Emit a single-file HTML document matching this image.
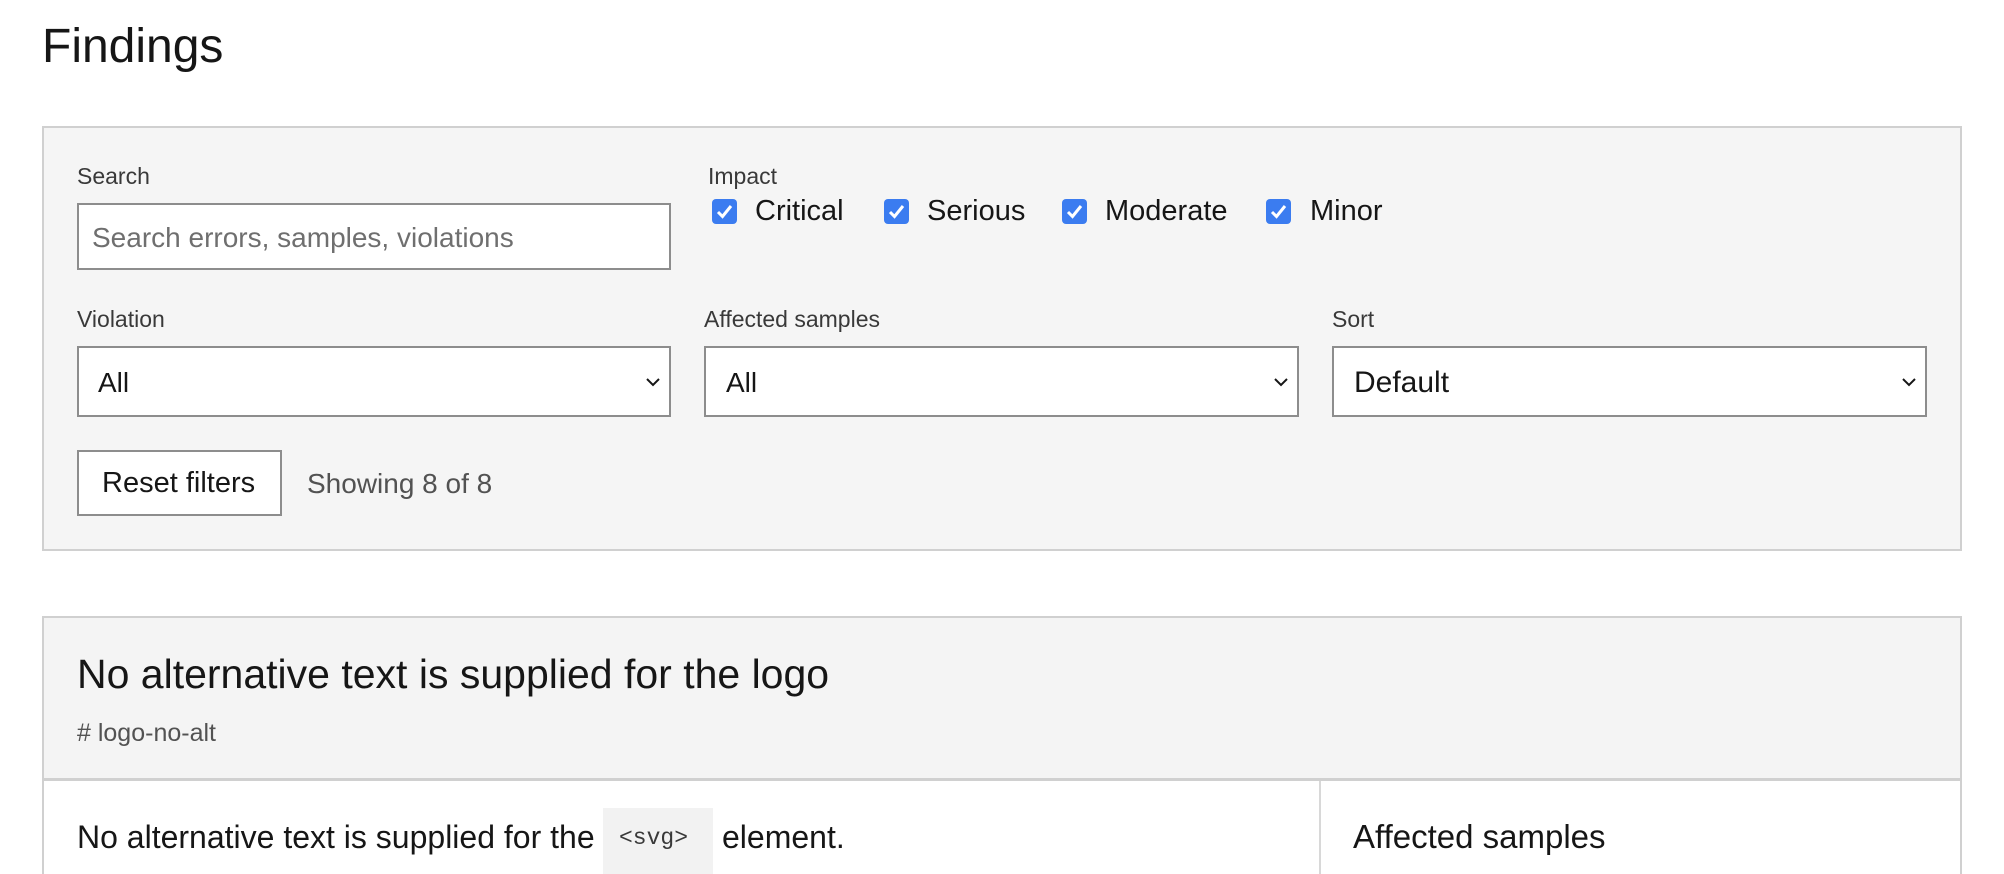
<!DOCTYPE html>
<html style="overflow:hidden"><head><meta charset="utf-8"><style>
*{box-sizing:border-box;margin:0;padding:0}
html,body{width:2004px;height:874px;overflow:hidden}
body{background:#fff;font-family:"Liberation Sans",sans-serif;color:#161616;position:relative}
.a{position:absolute;white-space:nowrap}
.lbl{font-size:23px;color:#393939}
.box{position:absolute;border:2px solid #8d8d8d;background:#fff}
.cb{position:absolute;width:25px;height:25px;background:#3b7cf0;border-radius:4px}
.cb svg{position:absolute;left:3px;top:3px}
.ck{font-size:29px;color:#161616}
.sel{font-size:28px}
</style></head><body>
<div class="a" style="left:42px;top:19px;font-size:48px;font-weight:300">Findings</div>

<div style="position:absolute;left:42px;top:126px;width:1920px;height:425px;background:#f5f5f5;border:2px solid #d0d0d0"></div>

<div class="a lbl" style="left:77px;top:163px">Search</div>
<div class="box" style="left:77px;top:203px;width:594px;height:67px"></div>
<div class="a" style="left:92px;top:222px;font-size:28px;color:#6f6f6f">Search errors, samples, violations</div>

<div class="a lbl" style="left:708px;top:163px">Impact</div>
<div class="cb" style="left:712px;top:199px"><svg width="19" height="19" viewBox="0 0 19 19"><path d="M3 10 L7.5 14.5 L16 4" stroke="#fff" stroke-width="3" fill="none"/></svg></div>
<div class="a ck" style="left:755px;top:195px">Critical</div>
<div class="cb" style="left:884px;top:199px"><svg width="19" height="19" viewBox="0 0 19 19"><path d="M3 10 L7.5 14.5 L16 4" stroke="#fff" stroke-width="3" fill="none"/></svg></div>
<div class="a ck" style="left:927px;top:195px">Serious</div>
<div class="cb" style="left:1062px;top:199px"><svg width="19" height="19" viewBox="0 0 19 19"><path d="M3 10 L7.5 14.5 L16 4" stroke="#fff" stroke-width="3" fill="none"/></svg></div>
<div class="a ck" style="left:1105px;top:195px">Moderate</div>
<div class="cb" style="left:1266px;top:199px"><svg width="19" height="19" viewBox="0 0 19 19"><path d="M3 10 L7.5 14.5 L16 4" stroke="#fff" stroke-width="3" fill="none"/></svg></div>
<div class="a ck" style="left:1310px;top:195px">Minor</div>

<div class="a lbl" style="left:77px;top:306px">Violation</div>
<div class="a lbl" style="left:704px;top:306px">Affected samples</div>
<div class="a lbl" style="left:1332px;top:306px">Sort</div>

<div class="box" style="left:77px;top:346px;width:594px;height:71px"></div>
<div class="a sel" style="left:98px;top:367px">All</div>
<svg class="a" style="left:645px;top:376px" width="16" height="12" viewBox="0 0 16 12"><path d="M2 3 L8 9 L14 3" stroke="#161616" stroke-width="2" fill="none"/></svg>
<div class="box" style="left:704px;top:346px;width:595px;height:71px"></div>
<div class="a sel" style="left:726px;top:367px">All</div>
<svg class="a" style="left:1273px;top:376px" width="16" height="12" viewBox="0 0 16 12"><path d="M2 3 L8 9 L14 3" stroke="#161616" stroke-width="2" fill="none"/></svg>
<div class="box" style="left:1332px;top:346px;width:595px;height:71px"></div>
<div class="a" style="left:1354px;top:366px;font-size:30px">Default</div>
<svg class="a" style="left:1901px;top:376px" width="16" height="12" viewBox="0 0 16 12"><path d="M2 3 L8 9 L14 3" stroke="#161616" stroke-width="2" fill="none"/></svg>

<div class="box" style="left:77px;top:450px;width:205px;height:66px"></div>
<div class="a" style="left:102px;top:467px;font-size:29px">Reset filters</div>
<div class="a" style="left:307px;top:468px;font-size:28px;color:#525252">Showing 8 of 8</div>

<div style="position:absolute;left:42px;top:616px;width:1920px;height:270px;border:2px solid #d0d0d0;background:#fff"></div>
<div style="position:absolute;left:44px;top:618px;width:1916px;height:163px;background:#f4f4f4;border-bottom:3px solid #d0d0d0"></div>
<div class="a" style="left:77px;top:651px;font-size:41px">No alternative text is supplied for the logo</div>
<div class="a" style="left:77px;top:719px;font-size:25px;color:#525252">#&nbsp;logo-no-alt</div>
<div style="position:absolute;left:1319px;top:781px;width:2px;height:100px;background:#d8d8d8"></div>
<div class="a" style="left:77px;top:819px;font-size:32px">No alternative text is supplied for the</div>
<div style="position:absolute;left:603px;top:808px;width:110px;height:66px;background:#f2f2f2"></div>
<div class="a" style="left:619px;top:825px;font-size:23px;font-family:'Liberation Mono',monospace;color:#393939">&lt;svg&gt;</div>
<div class="a" style="left:722px;top:819px;font-size:32px">element.</div>
<div class="a" style="left:1353px;top:818px;font-size:33px">Affected samples</div>
</body></html>
